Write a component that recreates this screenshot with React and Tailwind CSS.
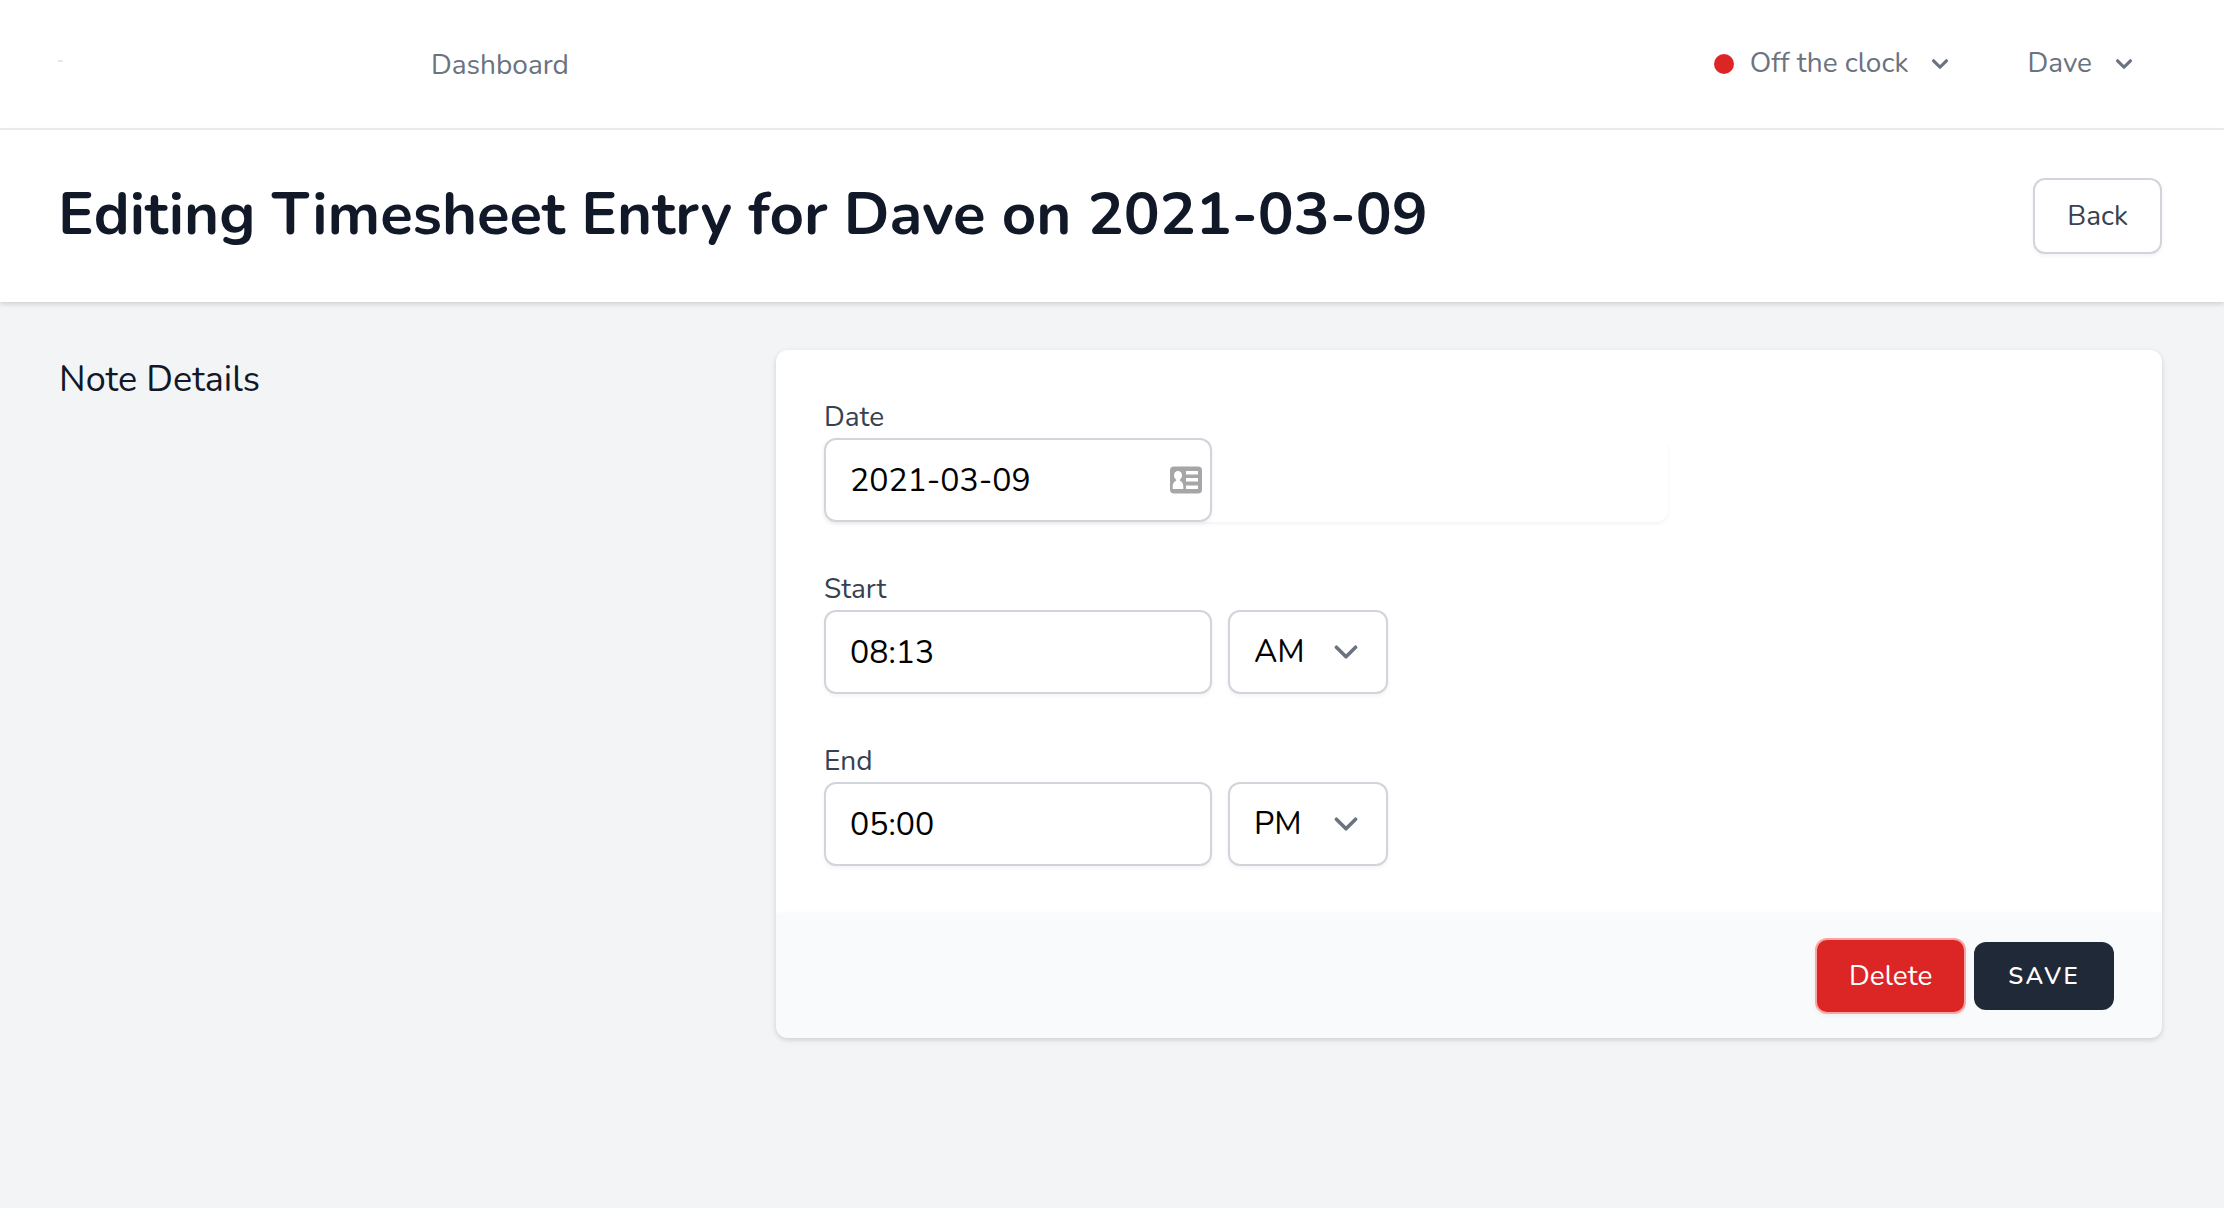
import React from "react";

function SmallChevron() {
  return (
    <svg className="size-8 shrink-0" viewBox="0 0 20 20" fill="currentColor" aria-hidden="true">
      <path
        fillRule="evenodd"
        clipRule="evenodd"
        d="M5.293 7.293a1 1 0 011.414 0L10 10.586l3.293-3.293a1 1 0 111.414 1.414l-4 4a1 1 0 01-1.414 0l-4-4a1 1 0 010-1.414z"
      />
    </svg>
  );
}

function ContactCardIcon() {
  return (
    <svg className="h-7 w-8" viewBox="0 0 32 28" aria-hidden="true">
      <rect x="0" y="0.5" width="32" height="27" rx="4" fill="#a6a6a6" />
      <g fill="#ffffff">
        <ellipse cx="8" cy="9.5" rx="4" ry="4.5" />
        <path d="M6.3 12h3.4v2.4c2.3 1 3.6 3.3 3.6 5.8V23H2.7v-2.8c0-2.5 1.3-4.8 3.6-5.8z" />
        <rect x="16" y="5" width="12" height="3.5" />
        <rect x="16" y="12" width="12" height="3.5" />
        <rect x="16" y="19.5" width="12" height="3.5" />
      </g>
    </svg>
  );
}

const labelClass = "block pb-0.5 text-[28px] leading-[38px] text-[#374151]";

const fieldClass =
  "block h-[84px] rounded-xl border-2 border-[#d1d5db] bg-white px-6 text-[32px] leading-12 text-black shadow-[0_2px_4px_rgba(0,0,0,0.05)]";

function TimeField({ id, label, time, period }) {
  return (
    <div className="col-span-6">
      <label htmlFor={id} className={labelClass}>
        {label}
      </label>
      <div className="flex gap-4">
        <input id={id} type="text" defaultValue={time} className={`${fieldClass} w-[388px]`} />
        <div className="relative">
          <select
            aria-label={`${label} period`}
            defaultValue={period}
            className={`${fieldClass} w-40 appearance-none`}
          >
            <option>AM</option>
            <option>PM</option>
          </select>
          <svg
            className="pointer-events-none absolute top-1/2 right-[18px] size-12 -translate-y-1/2 text-[#6b7280]"
            viewBox="0 0 20 20"
            fill="none"
            stroke="currentColor"
            strokeWidth="1.5"
            strokeLinecap="round"
            strokeLinejoin="round"
            aria-hidden="true"
          >
            <path d="M6 8l4 4 4-4" />
          </svg>
        </div>
      </div>
    </div>
  );
}

function NavBar() {
  return (
    <nav className="flex h-[130px] items-center justify-between border-b-2 border-[#eeeeef] bg-white pr-[84px] pl-[58px] text-[28px] leading-10 text-[#6b7280]">
      <div className="flex items-center">
        <a href="#home" aria-label="Home" className="flex w-[373px] pb-1.5">
          <span className="h-0.5 w-[5px] bg-gray-200" />
        </a>
        <a href="#dashboard" className="pt-0.5">
          Dashboard
        </a>
      </div>
      <div className="flex items-center gap-[71px]">
        <button type="button" className="flex items-center gap-4">
          <span className="size-5 rounded-full bg-[#dc2626]" />
          <span className="pb-0.5">Off the clock</span>
          <SmallChevron />
        </button>
        <button type="button" className="flex items-center gap-4">
          <span className="pb-0.5">Dave</span>
          <SmallChevron />
        </button>
      </div>
    </nav>
  );
}

export default function App() {
  return (
    <div className="min-h-screen bg-[#f3f4f6] font-['Nunito','Lato',sans-serif]">
      <NavBar />
      <header className="flex items-start justify-between bg-white py-12 pr-[62px] pl-[58px] shadow-[0_2px_6px_rgba(0,0,0,0.1),0_2px_4px_rgba(0,0,0,0.06)]">
        <h1 className="text-[60px] leading-[72px] font-bold text-[#111827]">
          Editing Timesheet Entry for Dave on 2021-03-09
        </h1>
        <a
          href="#back"
          className="rounded-xl border-2 border-[#d1d5db] bg-white px-8 py-4 text-[28px] leading-10 text-[#374151] shadow-[0_2px_4px_rgba(0,0,0,0.05)]"
        >
          Back
        </a>
      </header>
      <main className="grid grid-cols-3 gap-12 py-12 pr-[62px] pl-[59px]">
        <h2 className="pt-0.5 text-[36px] leading-[56px] text-[#111827]">Note Details</h2>
        <form
          className="col-span-2 overflow-hidden rounded-xl bg-white shadow-[0_2px_6px_rgba(0,0,0,0.1),0_2px_4px_rgba(0,0,0,0.06)]"
          onSubmit={(e) => e.preventDefault()}
        >
          <div className="grid grid-cols-6 gap-12 p-12">
            <div className="col-span-4">
              <label htmlFor="date" className={labelClass}>
                Date
              </label>
              <div className="rounded-xl shadow-[0_2px_4px_rgba(0,0,0,0.05)]">
                <div className="relative w-[388px]">
                  <input id="date" type="text" defaultValue="2021-03-09" className={`${fieldClass} w-full`} />
                  <span className="absolute top-1/2 right-2.5 -translate-y-1/2">
                    <ContactCardIcon />
                  </span>
                </div>
              </div>
            </div>
            <TimeField id="start" label="Start" time="08:13" period="AM" />
            <TimeField id="end" label="End" time="05:00" period="PM" />
          </div>
          <div className="flex items-center justify-end gap-2 bg-[#f9fafb] px-12 py-6 shadow-[0_2px_6px_rgba(0,0,0,0.1),0_2px_4px_rgba(0,0,0,0.06)]">
            <button
              type="button"
              className="rounded-xl border-2 border-[#fca5a5] bg-[#dc2626] px-8 py-4 text-[28px] leading-10 text-white shadow-[0_2px_4px_rgba(0,0,0,0.05)]"
            >
              Delete
            </button>
            <button
              type="submit"
              className="rounded-xl border-2 border-transparent bg-[#1f2937] px-8 py-4 text-2xl leading-8 font-semibold tracking-widest text-white uppercase"
            >
              Save
            </button>
          </div>
        </form>
      </main>
    </div>
  );
}
